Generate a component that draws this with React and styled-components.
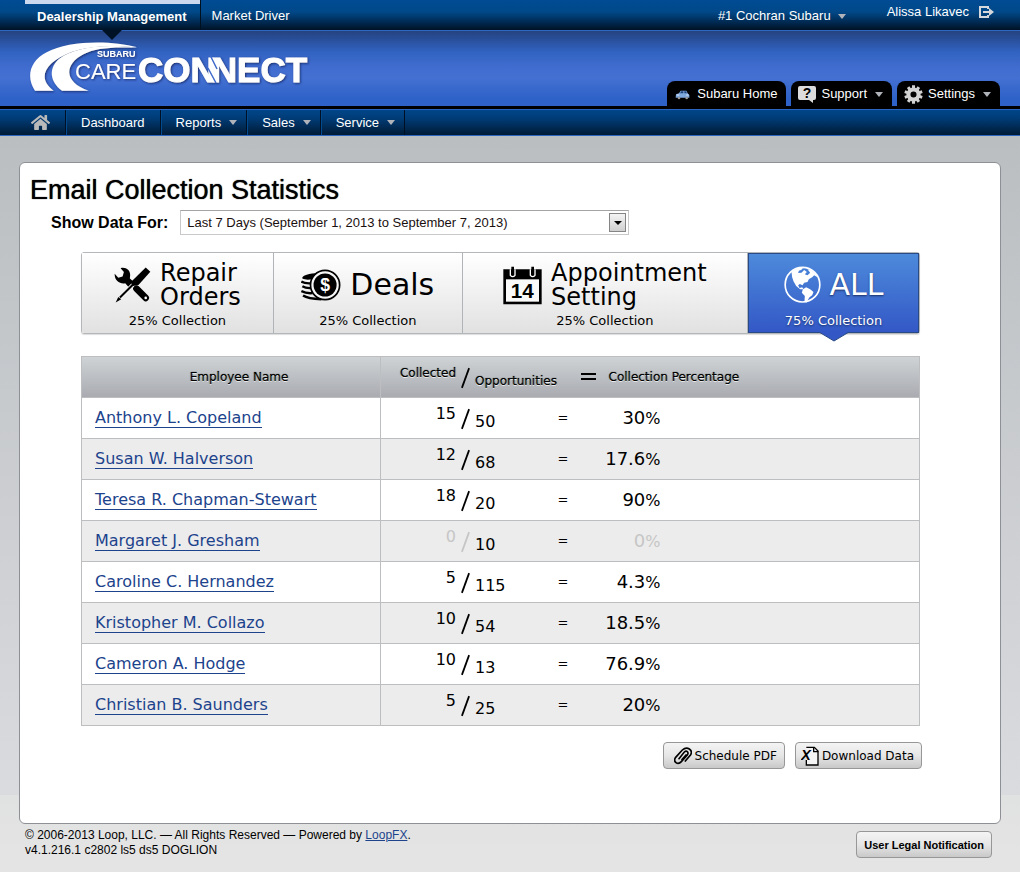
import React from "react";
import styled, { createGlobalStyle, css } from "styled-components";
import { FaHome, FaCog } from "react-icons/fa";

const sans = '"Liberation Sans", Arial, sans-serif';
const wide = '"DejaVu Sans", Verdana, sans-serif';

const GlobalStyle = createGlobalStyle`
  *, *::before, *::after { box-sizing: border-box; }
  html { min-height: 100%; background: #e4e4e4; }
  body { margin: 0; font: 13px/16px ${sans}; color: #000; }
  button { font: inherit; color: inherit; border: 0; margin: 0; padding: 0; background: none; cursor: pointer; }
`;

const Page = styled.div`
  min-height: 100vh;
  background:
    linear-gradient(#babec1, #dadbdf) 0 136px / 100% 659px no-repeat,
    linear-gradient(#e0e1e1, #e4e4e4) 0 795px / 100% 60px no-repeat,
    #e4e4e4;
`;

const TopBar = styled.div`
  display: flex;
  justify-content: space-between;
  height: 31px;
  padding: 0 26px 0 25px;
  color: #fff;
  background: linear-gradient(#004b94, #004888 40%, #002448 80%, #001225);
  border-bottom: 1px solid #2f68c2;
`;

const TopGroup = styled.nav`
  display: flex;
`;

const TopTab = styled.a`
  position: relative;
  display: block;
  height: 30px;
  padding: 7px 11px 0;
  color: #fff;
  text-decoration: none;
  font-size: 13px;
  line-height: 17px;
  ${(p) =>
    p.$active &&
    css`
      padding: 8px 13px 0 12px;
      font-weight: bold;
      background: linear-gradient(#ccd8ee, #ccd8ee) 0 0 / 100% 4px no-repeat;
      border-right: 1px solid #00101f;
      &::after {
        content: "";
        position: absolute;
        z-index: 1;
        left: 50%;
        top: 30px;
        margin-left: -10px;
        border: 10px solid transparent;
        border-top-color: #001225;
        border-bottom: 0;
      }
    `}
`;

const Account = styled.div`
  display: flex;
  align-items: flex-start;
  gap: 41px;
`;

const DealerButton = styled.button`
  display: flex;
  align-items: center;
  gap: 7px;
  padding-top: 8px;
`;

const UserButton = styled.button`
  display: flex;
  align-items: center;
  gap: 10px;
  padding-top: 4px;
`;

const CaretMark = styled.span`
  border: 4px solid transparent;
  border-top: 5px solid #b0b3ba;
  border-bottom: 0;
`;

const Banner = styled.header`
  display: flex;
  justify-content: space-between;
  align-items: flex-end;
  height: 78px;
  padding: 0 20px 0 25px;
  color: #fff;
  background: linear-gradient(#24427f, #3163c2 28%, #426dd0 50%, #4470d2 62%, #2f62c8 90%, #2e62c8);
  border-bottom: 3px solid #000;
`;

const HeaderTabs = styled.nav`
  display: flex;
  gap: 5px;
`;

const HeaderTab = styled.a`
  display: flex;
  align-items: center;
  gap: ${(p) => p.$gap}px;
  height: 25px;
  padding: 1px 9px 0 ${(p) => p.$left}px;
  color: #fff;
  text-decoration: none;
  background: #000;
  border-radius: 8px 8px 0 0;
  ${CaretMark} { margin-left: 3px; }
`;

const MainNav = styled.nav`
  display: flex;
  height: 27px;
  background: linear-gradient(#00468a, #003b75 35%, #001a35);
  border-top: 1px solid #2c65c0;
  border-bottom: 1px solid #2c65c0;
`;

const NavItem = styled.a`
  display: flex;
  align-items: center;
  gap: 8px;
  padding: 0 ${(p) => (p.$caret ? 9 : 15)}px 0 15px;
  color: #fff;
  text-decoration: none;
  border-right: 1px solid #001024;
  box-shadow: inset 1px 0 #004a90;
`;

const HomeItem = styled(NavItem)`
  padding: 0 15px 0 31px;
  box-shadow: none;
  color: #b9b9b9;
`;

const Card = styled.main`
  margin: 26px 19px 0;
  padding: 13px 80px 54px 61px;
  background: #fff;
  border: 1px solid #8d9094;
  border-radius: 6px;
`;

const Title = styled.h1`
  margin: 0 0 6px -51px;
  font-size: 27px;
  font-weight: normal;
  line-height: 28px;
  text-shadow: 0 0 1px #000;
`;

const FilterRow = styled.div`
  display: flex;
  align-items: center;
  gap: 12px;
  margin: 0 0 17px -30px;
`;

const FilterLabel = styled.label`
  font-size: 16px;
  font-weight: bold;
`;

const SelectBox = styled.div`
  position: relative;
  flex: 0 1 449px;
`;

const Select = styled.select`
  appearance: none;
  display: block;
  width: 100%;
  height: 25px;
  padding: 0 24px 0 6px;
  font: 13px ${sans};
  color: #1a1010;
  background: #fff;
  border: 1px solid #c8c8c8;
  border-top-color: #a4a4a4;
  border-radius: 0;
`;

const SelectArrow = styled.span`
  position: absolute;
  right: 3px;
  top: 3px;
  display: flex;
  align-items: center;
  justify-content: center;
  width: 17px;
  height: 19px;
  pointer-events: none;
  background: linear-gradient(#f4f4f4, #cfcfcf);
  border: 1px solid #858585;
  &::after {
    content: "";
    border: 4px solid transparent;
    border-top-color: #000;
    border-bottom: 0;
  }
`;

const StatTabs = styled.div`
  display: flex;
  height: 82px;
  margin-bottom: 22px;
  border: 1px solid #b4b7ba;
  border-radius: 3px;
  box-shadow: 0 1px 1px #ddd;
`;

const StatTab = styled.button`
  position: relative;
  flex: ${(p) => p.$share} 1 0;
  display: flex;
  flex-direction: column;
  align-items: center;
  padding-top: 8px;
  font: 13px/16px ${wide};
  background: linear-gradient(#fff, #e1e1e1);
  border-right: 1px solid #b0b3b8;
  ${(p) =>
    p.$active &&
    css`
      padding-top: 7px;
      color: #fff;
      text-shadow: 0 1px 2px #1b2f66;
      background: linear-gradient(#4d8adb, #3358c6);
      border: 1px solid #2a4a86;
    `}
`;

const StatHead = styled.span`
  display: flex;
  align-items: center;
  gap: 9px;
  height: 48px;
  margin-bottom: 4px;
  text-align: left;
  font-size: ${(p) => (p.$large ? 30 : 24)}px;
  line-height: 24px;
  white-space: pre-line;
`;

const Pointer = styled.svg`
  position: absolute;
  left: 50%;
  bottom: -10px;
  margin-left: -15px;
`;

const Table = styled.table`
  width: 100%;
  table-layout: fixed;
  border-collapse: collapse;
  border: 1px solid #bcbec0;
  font-family: ${wide};
`;

const HeadRow = styled.tr`
  height: 41px;
  background: linear-gradient(#cfd3d5, #a8aab0);
`;

const HeadCell = styled.th`
  padding: 0 0 0 ${(p) => p.$left || 0}px;
  text-align: ${(p) => p.$align || "left"};
  font-size: 12px;
  font-weight: normal;
  white-space: nowrap;
  text-shadow: 0 1px #e8eaec, 0 0 1px #000;
  border-right: ${(p) => (p.$line ? "1px solid #bcbec0" : "0")};
`;

const Row = styled.tr`
  height: 41px;
  background: #fff;
  border-top: 1px solid #bcbec0;
  &:nth-child(even) { background: #ececec; }
`;

const Cell = styled.td`
  padding: 0 0 0 ${(p) => p.$left || 0}px;
  font-size: ${(p) => p.$size || 16}px;
  line-height: 20px;
  border-right: ${(p) => (p.$line ? "1px solid #bcbec0" : "0")};
`;

const NameLink = styled.a`
  color: #1c438c;
  text-decoration: none;
  border-bottom: 1px solid #1c438c;
`;

const Ratio = styled.div`
  display: grid;
  grid-template-columns: 75px 9px 1fr;
  column-gap: 5px;
  align-items: center;
  height: 40px;
  line-height: 20px;
`;

const Collected = styled.span`
  align-self: start;
  padding-top: 6px;
  text-align: right;
  color: ${(p) => (p.$muted ? "#c6c6c6" : "inherit")};
`;

const Opportunities = styled.span`
  align-self: end;
  padding-bottom: 6px;
`;

const Percent = styled.div`
  width: 60px;
  text-align: right;
  font-size: 18px;
  color: ${(p) => (p.$muted ? "#c6c6c6" : "inherit")};
  small { font-size: 16px; }
`;

const Actions = styled.div`
  display: flex;
  justify-content: flex-end;
  gap: 10px;
  margin: 16px -2px 0 0;
`;

const GlossButton = styled.button`
  display: flex;
  align-items: center;
  justify-content: center;
  gap: 3px;
  height: 27px;
  padding: 0 7px 0 ${(p) => p.$left || 7}px;
  font: 12px/16px ${wide};
  background: linear-gradient(#f4f4f4, #e6e6e6 50%, #c9c9c9);
  border: 1px solid #979797;
  border-radius: 4px;
`;

const LegalButton = styled(GlossButton)`
  font: bold 11px/16px ${sans};
  margin-top: 3px;
`;

const Footer = styled.footer`
  display: flex;
  align-items: flex-start;
  justify-content: space-between;
  padding: 4px 28px 12px 25px;
  font-size: 12px;
  line-height: 15px;
  p { margin: 0; }
  a { color: #1c438c; }
`;

const Logo = () => (
  <svg width="290" height="75" viewBox="25 31 290 75" role="img" aria-label="Subaru CareConnect">
    <defs>
      <filter id="logoShadow" x="-5%" y="-10%" width="115%" height="130%">
        <feDropShadow dx="1" dy="1" stdDeviation="1" floodColor="#142c66" floodOpacity="0.9" />
      </filter>
    </defs>
    <g fill="#fff" filter="url(#logoShadow)">
      <g transform="scale(.33333)">
        <path d="M105 272C78 232 88 184 140 157 204 122 330 120 412 142 330 135 262 138 214 156 130 188 112 238 161 272Z" />
        <path d="M186 272C150 245 144 205 178 176 222 142 320 130 412 144 330 140 286 146 252 162 192 192 190 246 266 272Z" />
      </g>
      <text x="97" y="57" fontFamily={sans} fontSize="9" fontWeight="bold">SUBARU</text>
      <text x="75" y="79" fontFamily={sans} fontSize="22">CARE</text>
      <text x="138" y="82" fontFamily={sans} fontSize="35" fontWeight="bold" stroke="#fff" strokeWidth="1">
        CON<tspan dx="-4">NECT</tspan>
      </text>
    </g>
    <path d="M210 55l7 14M208 68l8 15" stroke="#3f6acb" strokeWidth="1.5" fill="none" />
  </svg>
);

const LogoutIcon = () => (
  <svg width="15" height="14" viewBox="0 0 15 14" fill="none" stroke="#d6d8dc" strokeWidth="2">
    <path d="M9 4V2H1v10h8v-2" />
    <path d="M4 7h7" />
    <path d="M10 3l5 4-5 4z" fill="#d6d8dc" stroke="none" />
  </svg>
);

const CarIcon = () => (
  <svg width="15" height="11" viewBox="0 0 45 33">
    <path d="M3 16 12 13 17 5h17l5 9 4 4v8H2z" fill="#7fa8dc" />
    <path d="M15 13l4-6h6v6zM28 7h5l3 6h-8z" fill="#1f4378" />
    <path d="M5 18h8M34 18h7" stroke="#dce9fa" strokeWidth="3" />
    <circle cx="12" cy="27" r="4" fill="#9a9a9a" />
    <circle cx="35" cy="27" r="4" fill="#9a9a9a" />
  </svg>
);

const HelpIcon = () => (
  <svg width="18" height="17" viewBox="0 0 18 17">
    <path d="M2 0h14q2 0 2 2v10q0 2-2 2h-1v3l-4-3H2q-2 0-2-2V2q0-2 2-2z" fill="#dcdcdc" />
    <text x="9" y="12" textAnchor="middle" fontFamily={sans} fontWeight="bold" fontSize="14" fill="#000">?</text>
  </svg>
);

const GearIcon = () => (
  <svg width="19" height="19" viewBox="-28 -28 56 56" fill="none" stroke="#d2d2d2">
    <circle r="15" strokeWidth="12" />
    {[0, 36, 72, 108, 144].map((a) => (
      <path key={a} d="M0-27V-18M0 18V27" strokeWidth="9" transform={`rotate(${a})`} />
    ))}
  </svg>
);

const ToolsIcon = () => (
  <svg width="37" height="36" viewBox="0 0 112 108">
    <path d="M2 20 13 32 26 28 30 15 20 3C36-1 49 9 49 24L48 34 61 46 46 62 34 49C18 52 1 42 2 20Z" />
    <path d="M68 65 96 93" stroke="#000" strokeWidth="20" strokeLinecap="round" />
    <circle cx="96" cy="93" r="4" fill="#fff" />
    <path d="M58 52 18 94" stroke="#f4f4f4" strokeWidth="12" />
    <path d="M96 1 110 14 74 54 57 57 52 50 56 40Z" />
    <path d="M60 50 18 92" stroke="#000" strokeWidth="6" />
    <path d="M5 107 13 90 22 97Z" />
  </svg>
);

const CoinsIcon = () => (
  <svg width="40" height="32" viewBox="0 0 118 94">
    <path d="M4 28C0 18 26 12 52 12L34 30C22 32 12 32 4 28Z" />
    <g fill="none" stroke="#000" strokeWidth="7">
      <path d="M1 37C10 43 20 43 32 42M4 51C12 56 20 57 32 56M1 65C12 71 22 72 34 71M6 78C18 86 34 88 60 89" />
    </g>
    <circle cx="71" cy="47" r="43" fill="#f6f6f6" stroke="#000" strokeWidth="5" />
    <circle cx="71" cy="47" r="34" />
    <text x="71" y="65" textAnchor="middle" fontFamily={sans} fontSize="52" fontWeight="bold" fill="#fff">$</text>
  </svg>
);

const CalendarIcon = () => (
  <svg width="39" height="39" viewBox="0 0 117 117">
    <path d="M1 10h115v105H1z" />
    <rect x="9" y="40" width="99" height="67" fill="#fafafa" />
    <path d="M22 10v18q7 8 14 0V10M82 10v18q7 8 14 0V10" fill="none" stroke="#fff" strokeWidth="4" />
    <path d="M29 2v24M89 2v24" stroke="#000" strokeWidth="8" />
    <text x="58" y="97" textAnchor="middle" fontFamily={sans} fontSize="62" fontWeight="bold">14</text>
  </svg>
);

const GlobeIcon = () => (
  <svg width="37" height="38" viewBox="0 0 110 114">
    <circle cx="55" cy="56" r="52" fill="none" stroke="#fff" strokeWidth="5" />
    <g fill="#fff">
      <path d="M22 18C32 8 44 4 58 4L52 11 44 14 42 21 52 20 60 12 68 18 62 25 70 28 78 20 70 10 80 12C92 20 98 26 100 34L90 28 84 34 74 40 70 48 60 50 55 58 47 54 42 58 46 66 54 64 58 70 48 70 36 60 28 46 24 34Z" />
      <path d="M56 70 66 64 78 70 88 78 84 88 76 94 66 110 61 104 62 90 53 80Z" />
    </g>
  </svg>
);

const ClipIcon = () => (
  <svg width="18" height="18" viewBox="0 0 54 54" fill="none" stroke="#000" strokeWidth="5" strokeLinecap="round">
    <path d="M15 35 31 15Q36 10 40 14T40 24L22 44Q14 53 6 47T5 31L25 9Q36-1 46 6T50 23L34 42M24 38 36 24" />
  </svg>
);

const SheetIcon = () => (
  <svg width="18" height="20" viewBox="0 0 54 60">
    <path d="M16 4h24l11 11v42H16V42" fill="#f4f4f4" stroke="#000" strokeWidth="4" />
    <path d="M38 3v14h14" fill="none" stroke="#000" strokeWidth="4" />
    <text x="15" y="41" textAnchor="middle" fontFamily={sans} fontSize="44" fontWeight="bold" fontStyle="italic">X</text>
  </svg>
);

const SlashMark = () => (
  <svg width="10" height="24" viewBox="0 0 10 24" fill="none" stroke="currentColor" strokeWidth="2">
    <path d="M9 1 1 23" />
  </svg>
);

const SlashBox = styled.span`
  display: flex;
  padding-top: 2px;
  color: ${(p) => (p.$muted ? "#c6c6c6" : "inherit")};
`;

const stats = [
  { title: "Repair\nOrders", pct: 25, share: 192, icon: ToolsIcon },
  { title: "Deals", pct: 25, share: 189, icon: CoinsIcon, large: true },
  { title: "Appointment\nSetting", pct: 25, share: 286, icon: CalendarIcon },
  { title: "ALL", pct: 75, share: 170, icon: GlobeIcon, large: true, active: true },
];

const employees = [
  ["Anthony L. Copeland", 15, 50, "30"],
  ["Susan W. Halverson", 12, 68, "17.6"],
  ["Teresa R. Chapman-Stewart", 18, 20, "90"],
  ["Margaret J. Gresham", 0, 10, "0"],
  ["Caroline C. Hernandez", 5, 115, "4.3"],
  ["Kristopher M. Collazo", 10, 54, "18.5"],
  ["Cameron A. Hodge", 10, 13, "76.9"],
  ["Christian B. Saunders", 5, 25, "20"],
];

export default function App() {
  return (
    <Page>
      <GlobalStyle />
      <TopBar>
        <TopGroup>
          <TopTab href="#" $active>Dealership Management</TopTab>
          <TopTab href="#">Market Driver</TopTab>
        </TopGroup>
        <Account>
          <DealerButton>#1 Cochran Subaru<CaretMark /></DealerButton>
          <UserButton>Alissa Likavec<LogoutIcon /></UserButton>
        </Account>
      </TopBar>
      <Banner>
        <Logo />
        <HeaderTabs>
          <HeaderTab href="#" $left={8} $gap={7}><CarIcon />Subaru Home</HeaderTab>
          <HeaderTab href="#" $left={7} $gap={5}><HelpIcon />Support<CaretMark /></HeaderTab>
          <HeaderTab href="#" $left={7} $gap={5}><GearIcon />Settings<CaretMark /></HeaderTab>
        </HeaderTabs>
      </Banner>
      <MainNav>
        <HomeItem href="#" aria-label="Home"><FaHome size={19} /></HomeItem>
        <NavItem href="#">Dashboard</NavItem>
        <NavItem href="#" $caret>Reports<CaretMark /></NavItem>
        <NavItem href="#" $caret>Sales<CaretMark /></NavItem>
        <NavItem href="#" $caret>Service<CaretMark /></NavItem>
      </MainNav>
      <Card>
        <Title>Email Collection Statistics</Title>
        <FilterRow>
          <FilterLabel htmlFor="range">Show Data For:</FilterLabel>
          <SelectBox>
            <Select id="range">
              <option>Last 7 Days (September 1, 2013 to September 7, 2013)</option>
            </Select>
            <SelectArrow />
          </SelectBox>
        </FilterRow>
        <StatTabs>
          {stats.map(({ title, pct, share, icon: Icon, large, active }) => (
            <StatTab key={title} $share={share} $active={active}>
              <StatHead $large={large}><Icon /><span>{title}</span></StatHead>
              {pct}% Collection
              {active && (
                <Pointer width="30" height="10" viewBox="0 0 30 10">
                  <path d="M0 0 15 9 30 0" fill="#3358c6" stroke="#2a4a86" />
                </Pointer>
              )}
            </StatTab>
          ))}
        </StatTabs>
        <Table>
          <colgroup>
            <col style={{ width: 299 }} />
            <col style={{ width: 176 }} />
            <col style={{ width: 44 }} />
            <col />
          </colgroup>
          <thead>
            <HeadRow>
              <HeadCell $align="center" $left={16} $line>Employee Name</HeadCell>
              <HeadCell>
                <Ratio>
                  <Collected>Collected</Collected>
                  <SlashBox><SlashMark /></SlashBox>
                  <Opportunities>Opportunities</Opportunities>
                </Ratio>
              </HeadCell>
              <HeadCell $left={24} aria-label="equals">
                <svg width="15" height="9" viewBox="0 0 15 9"><path d="M0 2h15M0 7h15" stroke="#000" strokeWidth="2" /></svg>
              </HeadCell>
              <HeadCell $left={8}>Collection Percentage</HeadCell>
            </HeadRow>
          </thead>
          <tbody>
            {employees.map(([name, got, total, pct]) => (
              <Row key={name}>
                <Cell $left={13} $line><NameLink href="#">{name}</NameLink></Cell>
                <Cell>
                  <Ratio>
                    <Collected $muted={got === 0}>{got}</Collected>
                    <SlashBox $muted={got === 0}><SlashMark /></SlashBox>
                    <Opportunities>{total}</Opportunities>
                  </Ratio>
                </Cell>
                <Cell $left={1} $size={13}>=</Cell>
                <Cell><Percent $muted={got === 0}>{pct}<small>%</small></Percent></Cell>
              </Row>
            ))}
          </tbody>
        </Table>
        <Actions>
          <GlossButton $left={10}><ClipIcon />Schedule PDF</GlossButton>
          <GlossButton $left={5}><SheetIcon />Download Data</GlossButton>
        </Actions>
      </Card>
      <Footer>
        <div>
          <p>© 2006-2013 Loop, LLC. — All Rights Reserved — Powered by <a href="#">LoopFX</a>.</p>
          <p>v4.1.216.1 c2802 ls5 ds5 DOGLION</p>
        </div>
        <LegalButton>User Legal Notification</LegalButton>
      </Footer>
    </Page>
  );
}
